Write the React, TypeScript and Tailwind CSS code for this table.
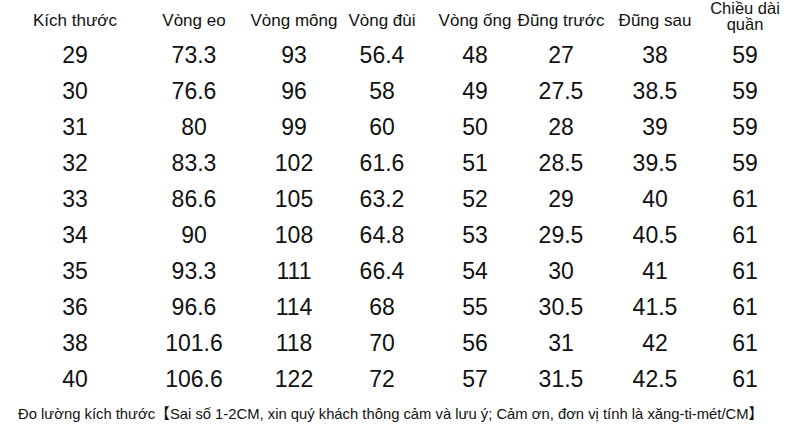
const headers = ["Kích thước", "Vòng eo", "Vòng mông", "Vòng đùi", "Vòng ống", "Đũng trước", "Đũng sau"];

const rows: string[][] = [
  ["29", "73.3", "93", "56.4", "48", "27", "38", "59"],
  ["30", "76.6", "96", "58", "49", "27.5", "38.5", "59"],
  ["31", "80", "99", "60", "50", "28", "39", "59"],
  ["32", "83.3", "102", "61.6", "51", "28.5", "39.5", "59"],
  ["33", "86.6", "105", "63.2", "52", "29", "40", "61"],
  ["34", "90", "108", "64.8", "53", "29.5", "40.5", "61"],
  ["35", "93.3", "111", "66.4", "54", "30", "41", "61"],
  ["36", "96.6", "114", "68", "55", "30.5", "41.5", "61"],
  ["38", "101.6", "118", "70", "56", "31", "42", "61"],
  ["40", "106.6", "122", "72", "57", "31.5", "42.5", "61"],
];

const grid = "grid grid-cols-[110px_128px_72px_104px_82px_90px_98px_82px] pl-[20px]";

export default function App() {
  return (
    <div
      className="w-[790px] h-[441px] overflow-hidden bg-white text-[#111]"
      style={{ fontFamily: '"Liberation Sans", Arial, "Noto Sans CJK SC", sans-serif' }}
    >
      <div className={`${grid} h-[37px] pt-[3px] text-[17px] leading-none`}>
        {headers.map((h) => (
          <div key={h} className="flex items-center justify-center whitespace-nowrap">
            {h}
          </div>
        ))}
        <div className="flex flex-col items-center justify-start -mt-[3px] text-[16.5px] leading-[16px] whitespace-nowrap">
          <span>Chiều dài</span>
          <span>quần</span>
        </div>
      </div>
      {rows.map((r) => (
        <div key={r[0]} className={`${grid} h-[36px] text-[23px] leading-none`}>
          {r.map((v, i) => (
            <div key={i} className="flex items-center justify-center whitespace-nowrap">
              {v}
            </div>
          ))}
        </div>
      ))}
      <div className="pl-[18px] pt-[10px] text-[14.8px] leading-none whitespace-nowrap">
        Đo lường kích thước【Sai số 1-2CM, xin quý khách thông cảm và lưu ý; Cảm ơn, đơn vị tính là xăng-ti-mét/CM】
      </div>
    </div>
  );
}
